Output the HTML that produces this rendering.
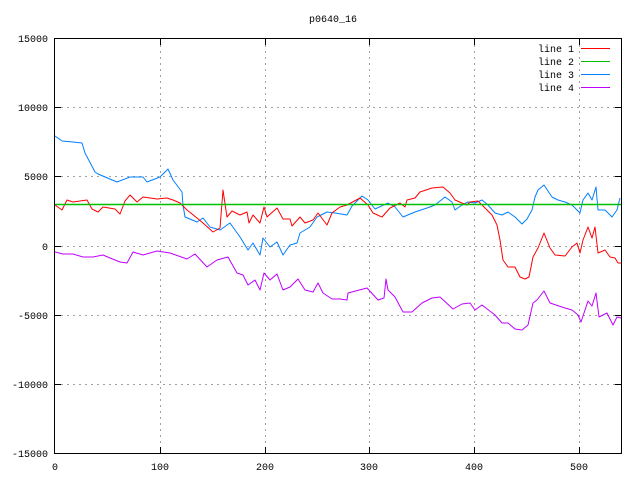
<!DOCTYPE html>
<html><head><meta charset="utf-8"><style>
html,body{margin:0;padding:0;background:#fff;}
svg{display:block;}
text{font-family:"Liberation Mono",monospace;font-size:10px;fill:#000;}
</style></head><body>
<svg width="640" height="480" viewBox="0 0 640 480" xmlns="http://www.w3.org/2000/svg">
<rect width="640" height="480" fill="#fff"/>
<g stroke="#a0a0a0" stroke-width="1" stroke-dasharray="2,4" fill="none">
<path d="M160.5 39V453M265.5 39V453M369.5 39V453M474.5 39V453M579.5 39V453"/>
<path d="M55 107.5H621M55 176.5H621M55 246.5H621M55 315.5H621M55 384.5H621"/>
</g>
<g stroke="#000" stroke-width="1" fill="none">
<path d="M55 107.5h6M55 176.5h6M55 246.5h6M55 315.5h6M55 384.5h6M621 107.5h-6M621 176.5h-6M621 246.5h-6M621 315.5h-6M621 384.5h-6"/>
<path d="M160.5 453v-6M265.5 453v-6M369.5 453v-6M474.5 453v-6M579.5 453v-6M160.5 39v6M265.5 39v6M369.5 39v6M474.5 39v6M579.5 39v6"/>
<rect x="54.5" y="38.5" width="567" height="415"/>
</g>
<g text-anchor="end">
<text x="48" y="42">15000</text>
<text x="48" y="111">10000</text>
<text x="48" y="180">5000</text>
<text x="48" y="250">0</text>
<text x="48" y="319">-5000</text>
<text x="48" y="388">-10000</text>
<text x="48" y="457">-15000</text>
</g>
<g text-anchor="middle">
<text x="55" y="470">0</text>
<text x="160" y="470">100</text>
<text x="265" y="470">200</text>
<text x="369" y="470">300</text>
<text x="474" y="470">400</text>
<text x="579" y="470">500</text>
<text x="333" y="22">p0640_16</text>
</g>
<g text-anchor="end">
<text x="574" y="52">line 1</text>
<text x="574" y="65">line 2</text>
<text x="574" y="78">line 3</text>
<text x="574" y="91">line 4</text>
</g>
<path d="M581 48.5h29" stroke="#ff0000"/>
<path d="M581 61.5h29" stroke="#00c000"/>
<path d="M581 74.5h29" stroke="#0080ff"/>
<path d="M581 87.5h29" stroke="#c000ff"/>
<g fill="none" stroke-width="1" stroke-linejoin="round">
<polyline stroke="#c000ff" points="55,252 63,254 73,254 83,257 93,257 103,255 110,258 120,262 127,263 133,252 143,255 157,251 170,253 187,259 195,254 207,267 217,260 228,257 237,273 243,275 248,285 255,280 260,290 264,273 270,280 277,274 283,290 290,287 298,279 305,290 313,292 318,283 323,293 332,299 340,299 347,300 348,293 367,288 378,300 384,298 386,279 388,290 395,297 403,312 412,312 422,303 432,298 440,297 453,309 462,304 470,303 475,310 482,305 495,315 502,323 508,323 515,329 522,330 528,325 533,303 537,300 544,291 550,303 565,308 572,310 578,315 581,322 588,301 592,306 596,293 599,317 607,313 613,325 617,317 621,318"/>
<polyline stroke="#0080ff" points="55,136 62,141 73,142 82,143 85,153 95,172 98,174 117,182 130,177 143,177 147,182 160,177 168,169 173,180 182,192 183,205 185,217 197,222 203,218 210,227 220,230 230,223 240,237 248,250 253,243 260,255 263,238 270,247 277,242 283,255 290,245 297,243 300,233 310,227 317,217 327,212 335,213 347,215 352,206 362,196 368,200 375,209 388,203 395,207 403,217 415,212 427,208 435,205 445,197 452,202 455,210 462,205 468,202 475,203 482,200 488,205 495,213 502,215 508,212 515,217 522,224 527,219 532,210 535,197 538,190 544,185 552,197 558,200 565,202 572,205 580,213 583,200 588,193 592,200 596,187 598,210 605,210 612,217 617,210 620,198"/>
<polyline stroke="#ff0000" points="55,205 62,210 67,200 73,202 87,200 92,209 98,212 103,207 115,209 120,214 125,201 130,195 137,202 143,197 157,199 167,198 173,200 180,203 187,210 197,218 203,223 213,232 220,228 223,190 224,197 227,217 232,211 240,215 247,212 249,223 253,215 260,223 264,207 267,217 277,208 283,219 290,219 292,226 300,217 305,223 313,220 318,213 327,225 332,213 340,207 347,205 360,198 368,205 373,213 382,217 390,208 400,203 405,207 407,200 415,198 420,192 432,188 443,187 450,193 455,200 462,203 467,205 470,202 478,201 485,208 492,215 497,225 500,240 503,260 508,267 515,267 520,277 525,279 529,277 533,257 538,248 544,233 550,248 555,255 565,256 572,247 577,243 580,253 583,240 588,227 592,238 595,227 598,253 605,250 610,257 615,258 618,263 621,263"/>
<path d="M55 204.5H621" stroke="#00c000" stroke-width="1.5"/>
</g>
</svg>
</body></html>
